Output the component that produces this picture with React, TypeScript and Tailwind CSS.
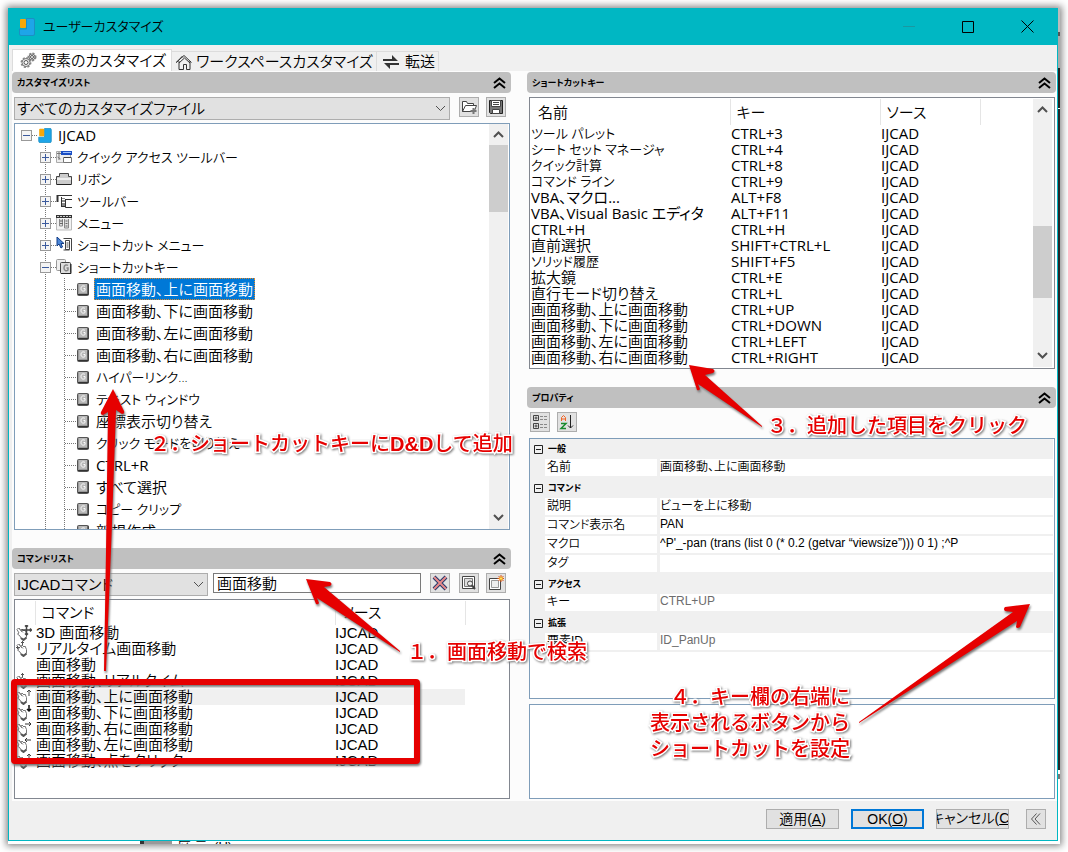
import { useState } from "react";
import type { ReactNode } from "react";
import clsx from "clsx";

type IconName =
  | "logo"
  | "quick"
  | "ribbon"
  | "toolbar"
  | "menu"
  | "context"
  | "keys"
  | "key";

type TreeItem = { label: string; level: number; icon: IconName; open?: boolean };

var treeItems: TreeItem[] = [
  { label: "IJCAD", level: 0, icon: "logo", open: true },
  { label: "クイック アクセス ツールバー", level: 1, icon: "quick" },
  { label: "リボン", level: 1, icon: "ribbon" },
  { label: "ツールバー", level: 1, icon: "toolbar" },
  { label: "メニュー", level: 1, icon: "menu" },
  { label: "ショートカット メニュー", level: 1, icon: "context" },
  { label: "ショートカットキー", level: 1, icon: "keys", open: true },
  { label: "画面移動、上に画面移動", level: 2, icon: "key" },
  { label: "画面移動、下に画面移動", level: 2, icon: "key" },
  { label: "画面移動、左に画面移動", level: 2, icon: "key" },
  { label: "画面移動、右に画面移動", level: 2, icon: "key" },
  { label: "ハイパーリンク...", level: 2, icon: "key" },
  { label: "テキスト ウィンドウ", level: 2, icon: "key" },
  { label: "座標表示切り替え", level: 2, icon: "key" },
  { label: "クリック モードを切り替え", level: 2, icon: "key" },
  { label: "CTRL+R", level: 2, icon: "key" },
  { label: "すべて選択", level: 2, icon: "key" },
  { label: "コピー クリップ", level: 2, icon: "key" },
  { label: "新規作成", level: 2, icon: "key" },
];

type HandKind = "cross" | "real" | "up" | "down" | "right" | "left" | "none";

var commands: { name: string; hand: HandKind }[] = [
  { name: "3D 画面移動", hand: "cross" },
  { name: "リアルタイム画面移動", hand: "real" },
  { name: "画面移動", hand: "none" },
  { name: "画面移動、リアルタイム", hand: "real" },
  { name: "画面移動、上に画面移動", hand: "up" },
  { name: "画面移動、下に画面移動", hand: "down" },
  { name: "画面移動、右に画面移動", hand: "right" },
  { name: "画面移動、左に画面移動", hand: "left" },
  { name: "画面移動、点をクリック", hand: "up" },
];

var shortcuts = [
  ["ツール パレット", "CTRL+3"],
  ["シート セット マネージャ", "CTRL+4"],
  ["クイック計算", "CTRL+8"],
  ["コマンド ライン", "CTRL+9"],
  ["VBA、マクロ...", "ALT+F8"],
  ["VBA、Visual Basic エディタ", "ALT+F11"],
  ["CTRL+H", "CTRL+H"],
  ["直前選択", "SHIFT+CTRL+L"],
  ["ソリッド履歴", "SHIFT+F5"],
  ["拡大鏡", "CTRL+E"],
  ["直行モード切り替え", "CTRL+L"],
  ["画面移動、上に画面移動", "CTRL+UP"],
  ["画面移動、下に画面移動", "CTRL+DOWN"],
  ["画面移動、左に画面移動", "CTRL+LEFT"],
  ["画面移動、右に画面移動", "CTRL+RIGHT"],
];

var properties = [
  {
    title: "一般",
    rows: [{ name: "名前", value: "画面移動、上に画面移動" }],
  },
  {
    title: "コマンド",
    rows: [
      { name: "説明", value: "ビューを上に移動" },
      { name: "コマンド表示名", value: "PAN" },
      {
        name: "マクロ",
        value: "^P'_-pan (trans (list 0 (* 0.2 (getvar “viewsize”))) 0 1) ;^P",
      },
      { name: "タグ", value: "" },
    ],
  },
  { title: "アクセス", rows: [{ name: "キー", value: "CTRL+UP", muted: true }] },
  { title: "拡張", rows: [{ name: "要素ID", value: "ID_PanUp", muted: true }] },
];

// labels written mostly in katakana are set one step smaller, latin ones heavier
function labelStyle(label: string) {
  if (/^[ァ-ー]{3}/.test(label)) return "text-[13px]";
  return /^[A-Z]/.test(label) ? "text-[15px] font-normal" : "text-[15px]";
}

function LogoIcon({ className }: { className?: string }) {
  return (
    <svg viewBox="0 0 16 18" className={className}>
      <path
        d="M7.500 .5h6.500q1.500 0 1.500 1.500v14q0 1.500-1.500 1.500H2Q.5 17.500 .5 16V11h7z"
        fill="#1ea5e8"
        stroke="#1b8fc4"
      />
      <rect x="1" y="1" width="6" height="9" rx="1" fill="#f7a70a" />
    </svg>
  );
}

function TreeIcon({ name }: { name: IconName }) {
  if (name == "logo") return <LogoIcon className="w-[14px] h-[15px] mr-px" />;
  if (name == "key")
    return (
      <svg width="12" height="13" viewBox="0 0 12 13" fill="none">
        <rect x=".5" y=".5" width="11" height="12" rx="1" fill="#9a9a9a" stroke="#555" />
        <path d="M1 11.500h10M11 1v11" stroke="#333" />
        <rect x="2" y="1" width="8" height="9" fill="#b8b8b8" />
        <path d="M8 3.500C7 2.500 4 2.500 4 5.500s3 3 4 2V5.500H6.500" stroke="#fff" />
      </svg>
    );
  return (
    <svg width="16" height="16" viewBox="0 0 16 16" fill="none">
      {name == "quick" && (
        <>
          <path d="M.5 2.500h14v11H.5z" fill="#eee" stroke="#aaa" />
          <path d="M5 2h11v4H5z" fill="#1c4fc4" />
          <path d="M7 3.500h8" stroke="#9fc2ff" />
          <path d="M1 4.500h4M3 3v8M1.500 8l3 2" stroke="#777" />
          <path d="M7.500 8.500h8v5h-8z" fill="#fff" stroke="#777" />
          <path d="M8 8.500h7" stroke="#444" />
        </>
      )}
      {name == "ribbon" && (
        <>
          <path d="M.5 5.500h3v-3h9v3h3v8H.5z" fill="#ccc" stroke="#444" />
          <path d="M1 7h14v2H1z" fill="#eee" />
          <path d="M1 13.500h14" stroke="#222" />
        </>
      )}
      {name == "toolbar" && (
        <>
          <path d="M1.500 2v7" stroke="#333" strokeWidth="2" />
          <path d="M2 2.500h14M9.500 6.500H16M9.500 6v8.500H16M5.500 4v9.500M5 13.500h4" stroke="#333" />
          <path d="M6 5h3v8H6z" fill="#888" />
          <path d="M6 6.500h3M6 9.500h3M3 4.500h2M3 7.500h2" stroke="#fff" />
        </>
      )}
      {name == "menu" && (
        <>
          <path d="M.5 2h15v13H.5z" fill="#f2f2f2" stroke="#bbb" />
          <path d="M0 1.500h16" stroke="#333" strokeWidth="3" />
          <path d="M1 1.500h14" stroke="#ccc" strokeDasharray="2 1" />
          <path d="M3.500 4v7h3V4M8.500 4v9h4V4" fill="#ddd" stroke="#888" />
          <path d="M4 6h3M4 8.500h3M9.500 6h2M9.500 8.500h2M9.500 11h2" stroke="#666" />
        </>
      )}
      {name == "context" && (
        <>
          <path d="M1 0v9l2-2 2 4 1.500-1L5 6.500h3z" fill="#4b86d8" stroke="#123c86" />
          <path d="M9.500 3.500h4v9h-4z" fill="#fff" stroke="#444" />
          <path d="M12 1.500h3.500V14M7.500 1.500H13M7.500 13h6" stroke="#444" />
          <path d="M10.500 6h2M10.500 8h2M10.500 10h2" stroke="#444" />
        </>
      )}
      {name == "keys" && (
        <>
          <rect x=".5" y=".5" width="9" height="11" rx="1" fill="#eee" stroke="#999" />
          <rect x="4.500" y="3.500" width="10" height="11" rx="1" fill="#ddd" stroke="#444" />
          <path d="M5 14.500h10V5" stroke="#222" />
          <path d="M12 6.500c-1-1-4-1-4 2.500s3 3 4 2V9h-1.500" stroke="#888" strokeWidth="1.500" />
        </>
      )}
    </svg>
  );
}

// dotted guide lines plus the +/- box at the start of every tree row
function TreeLines({ level, open }: { level: number; open?: boolean }) {
  var width = level == 0 ? 23 : level == 1 ? 41 : 62;
  var boxX = level == 0 ? 6 : 25;
  return (
    <svg width={width} height="22" viewBox={`0 0 ${width} 22`} fill="none" stroke="#777">
      {level > 0 && <path d="M30.500 0v22" strokeDasharray="1 1" />}
      {level == 2 ? (
        <path d="M49.500 0v22M50 11.500h12" strokeDasharray="1 1" />
      ) : (
        <>
          <path d={`M${boxX + 11} 11.500h6`} strokeDasharray="1 1" />
          <rect x={boxX + 0.5} y="6.500" width="10" height="10" fill="#f4f4f4" stroke="#999" />
          <path d={`M${boxX + 2} 11.500h7`} stroke="#3b5a9d" />
          {!open && <path d={`M${boxX + 5.5} 8v7`} stroke="#3b5a9d" />}
        </>
      )}
    </svg>
  );
}

function HandIcon({ kind }: { kind: HandKind }) {
  if (kind == "none") return null;
  return (
    <svg width="16" height="16" viewBox="0 0 16 16" fill="none" className="ml-px">
      <path
        d="M1 4.500L2.500 3 5 5.500 6 4l2 2 1-1 1.500 3.500V12l-2 2H5.500L4 11 1.500 9 3 8 1 4.500M3 3l3 4M5 5.500l2 2"
        stroke="#777"
      />
      <path d="M5 13l2.500 2 3-2.500" stroke="#555" strokeWidth="2" />
      {kind == "cross" && (
        <path d="M10.500 0v10M5.500 5h10M9 1.500L10.500 0 12 1.500M9 8.500l1.500 1.500L12 8.500M14 3.500L15.500 5 14 6.500" stroke="#444" strokeWidth="1.500" />
      )}
      {kind == "real" && <path d="M0 6.500h4M1.500 5v3M6.500 0v4M5 1.500h3" stroke="#555" />}
      {kind == "up" && <path d="M13 7V1M11 3l2-2 2 2" stroke="#444" />}
      {kind == "down" && <path d="M13 0v6M11 4l2 2 2-2" stroke="#111" strokeWidth="1.500" />}
      {kind == "right" && <path d="M9 3h6M13 1l2 2-2 2" stroke="#333" />}
      {kind == "left" && <path d="M9 3h6M11 1L9 3l2 2" stroke="#333" />}
    </svg>
  );
}

function Chevron({ up, light }: { up?: boolean; light?: boolean }) {
  return (
    <svg width="11" height="7" viewBox="0 0 11 7" fill="none" stroke="#505050" strokeWidth={light ? 1 : 2}>
      <path d={up ? "M1 6l4.500-4.500L10 6" : "M1 1l4.500 4.500L10 1"} />
    </svg>
  );
}

function PanelHeader({ title }: { title: string }) {
  return (
    <div className="flex h-[21px] items-center justify-between rounded-sm bg-[#c0c0c0] pl-[5px] pr-[5px]">
      <h2 className="text-[9px] leading-3 font-bold">{title}</h2>
      <button type="button" aria-label={`${title}を折りたたむ`}>
        <svg width="13" height="12" viewBox="0 0 13 12" fill="none" stroke="#000" strokeWidth="2">
          <path d="M1 6l5.500-4.500L12 6M1 11l5.500-4.500L12 11" />
        </svg>
      </button>
    </div>
  );
}

function ToolButton({ label, children }: { label: string; children: ReactNode }) {
  return (
    <button
      type="button"
      aria-label={label}
      className="flex h-5 w-5 shrink-0 items-center justify-center border border-[#adadad] bg-[#e1e1e1]"
    >
      <svg width="16" height="16" viewBox="0 0 16 16" fill="none" stroke="#444">
        {children}
      </svg>
    </button>
  );
}

function Combo({ label, value, className }: { label: string; value: string; className: string }) {
  return (
    <div className={clsx("relative h-[23px]", className)}>
      <select
        aria-label={label}
        className="block h-full w-full appearance-none border border-[#adadad] bg-[#e1e1e1] pl-0.5 text-[15px] leading-5"
      >
        <option>{value}</option>
      </select>
      <span className="pointer-events-none absolute top-2 right-1">
        <Chevron light />
      </span>
    </div>
  );
}

function ScrollBar({ before, thumb, className }: { before: string; thumb: string; className: string }) {
  return (
    <div className={clsx("flex w-[19px] shrink-0 flex-col items-center bg-[#f0f0f0]", className)}>
      <div className="flex h-[21px] shrink-0 items-center">
        <Chevron up />
      </div>
      <div className={before} />
      <div className={clsx("w-full bg-[#cdcdcd]", thumb)} />
      <div className="mt-auto flex h-6 items-center">
        <Chevron />
      </div>
    </div>
  );
}

function CustomizeTree() {
  var [selected, setSelected] = useState("画面移動、上に画面移動");

  return (
    <div className="ml-0.5 mr-px mt-[3px] flex h-[407px] overflow-hidden border border-[#7f9db9] bg-white">
      <ul className="min-w-0 flex-1 font-['Open_Sans','Noto_Sans_CJK_JP',sans-serif] leading-5">
        {treeItems.map((item) => (
          <li key={item.label} className="flex h-[22px] items-center">
            <TreeLines level={item.level} open={item.open} />
            <TreeIcon name={item.icon} />
            <button
              type="button"
              onClick={() => setSelected(item.label)}
              className={clsx(
                "border border-dotted px-px whitespace-nowrap",
                labelStyle(item.label),
                item.level == 2 ? "ml-[5px]" : "ml-[3px]",
                selected == item.label ? "border-[#e08a2c] bg-[#0078d7] text-white" : "border-transparent"
              )}
            >
              {item.label}
            </button>
          </li>
        ))}
      </ul>
      <ScrollBar before="" thumb="h-[67px]" className="mr-px" />
    </div>
  );
}

function CommandList() {
  return (
    <div className="ml-0.5 mr-px mt-[3px] h-[200px] overflow-hidden border border-[#828790] bg-white pt-px">
      <table className="w-full table-fixed border-collapse text-left text-[15px] leading-4">
        <colgroup>
          <col className="w-5" />
          <col className="w-[300px]" />
          <col className="w-[130px]" />
          <col />
        </colgroup>
        <thead>
          <tr className="h-6">
            <th className="border-r border-[#e5e5e5]" />
            <th className="border-r border-[#e5e5e5] pl-1.5 font-[350]">コマンド</th>
            <th className="border-r border-[#e5e5e5] pl-1.5 font-[350]">ソース</th>
            <th />
          </tr>
        </thead>
        <tbody>
          {commands.map((command, i) => (
            <tr key={command.name} className="h-4">
              <td className="p-0">
                <HandIcon kind={command.hand} />
              </td>
              <td className={clsx("p-0 pl-px whitespace-nowrap", i == 4 && "bg-[#f0f0f0]")}>{command.name}</td>
              <td className={clsx("p-0", i == 4 && "bg-[#f0f0f0]")}>IJCAD</td>
              <td />
            </tr>
          ))}
        </tbody>
      </table>
    </div>
  );
}

function ShortcutList() {
  return (
    <div className="ml-0.5 mr-px mt-1 flex h-[272px] overflow-hidden border border-[#828790] bg-white py-px">
      <div className="min-w-0 flex-1">
        <table className="w-full table-fixed border-collapse text-left font-['Open_Sans','Noto_Sans_CJK_JP',sans-serif] text-[15px] leading-4">
          <colgroup>
            <col className="w-[200px]" />
            <col className="w-[150px]" />
            <col className="w-[100px]" />
            <col />
          </colgroup>
          <thead>
            <tr className="h-[26px]">
              <th className="border-r border-[#e5e5e5] pl-2 font-[350]">名前</th>
              <th className="border-r border-[#e5e5e5] pl-1.5 font-[350]">キー</th>
              <th className="border-r border-[#e5e5e5] pl-1.5 font-[350]">ソース</th>
              <th />
            </tr>
          </thead>
          <tbody>
            {shortcuts.map(([name, key]) => (
              <tr key={name} className="h-4 whitespace-nowrap">
                <td className={clsx("p-0 pl-px leading-4", labelStyle(name))}>{name}</td>
                <td className="p-0 pl-px font-normal">{key}</td>
                <td className="p-0 pl-px font-normal">IJCAD</td>
                <td />
              </tr>
            ))}
          </tbody>
        </table>
      </div>
      <ScrollBar before="h-[106px]" thumb="h-[72px]" className="mr-0.5" />
    </div>
  );
}

function PropertyGrid() {
  return (
    <div className="ml-0.5 mr-px mt-1.5 h-[261px] overflow-hidden border border-[#7f9db9] bg-white pr-px">
      {properties.map((group) => (
        <section key={group.title} className="bg-[#f0f0f0]">
          <div className="flex h-5 items-center gap-[5px] pl-1">
            <button type="button" aria-label={`${group.title}を折りたたむ`}>
              <svg width="9" height="9" viewBox="0 0 9 9" fill="none" stroke="#222">
                <path d="M.5 .5h8v8h-8zM2 4.500h5" />
              </svg>
            </button>
            <h3 className="text-[9px] leading-3 font-bold">{group.title}</h3>
          </div>
          {group.rows.map((row) => (
            <label key={row.name} className="flex gap-[3px] pb-0.5 pl-[15px] text-[12px] leading-4">
              <span className="h-[17px] w-28 shrink-0 bg-white pl-0.5">{row.name}</span>
              <input
                defaultValue={row.value}
                readOnly={row.muted}
                className={clsx("h-[17px] min-w-0 flex-1 bg-white pb-1", row.muted && "text-[#6d6d6d]")}
              />
            </label>
          ))}
        </section>
      ))}
    </div>
  );
}

function Note({ className, children }: { className: string; children: ReactNode }) {
  return (
    <p
      className={clsx(
        "absolute text-right text-[20px] leading-[26px] font-medium whitespace-nowrap text-[#e60000] [font-feature-settings:normal]",
        "[paint-order:stroke_fill] [-webkit-text-stroke:3px_white] [filter:drop-shadow(1px_1px_1px_#777)]",
        className
      )}
    >
      {children}
    </p>
  );
}

function Annotations() {
  return (
    <div className="pointer-events-none absolute inset-0">
      <svg
        width="1068"
        height="852"
        viewBox="0 0 1068 852"
        className="[filter:drop-shadow(1px_2px_1px_#777)]"
        fill="#e60000"
      >
        <rect x="14" y="682" width="403" height="79" rx="1" fill="none" stroke="#e60000" strokeWidth="6" />
        <path d="M113 389l11 22q1 3-2 3l-6-4-5 140-5 121h-2l2-120 2-139-5 3q-3 0-2-3z" />
        <path d="M306 579l24 3q3 2 0 4l-6 1 76 64v1l-83-54 2 5q-1 2-3 1z" />
        <path d="M689 365l24 4q3 2 0 4l-8 2 57 51v1l-64-43 2 5q-1 2-3 1z" />
        <path d="M1030 604l-25 3q-2 2 0 4l8 1-154 110v1l158-102-1 6q1 2 4 0z" />
      </svg>
      <Note className="top-[431px] left-[150px]">
        ２．ショートカットキーに<b>D&amp;D</b>して追加
      </Note>
      <Note className="top-[639px] left-[407px]">１．画面移動で検索</Note>
      <Note className="top-[413px] left-[767px]">３．追加した項目をクリック</Note>
      <Note className="top-[684px] left-[650px]">
        ４．キー欄の右端に
        <br />
        表示されるボタンから
        <br />
        ショートカットを設定
      </Note>
    </div>
  );
}

function TitleBar() {
  return (
    <header className="flex h-[37px] items-center bg-[#00b7c3] pl-2.5">
      <LogoIcon className="h-[18px] w-4" />
      <h1 className="ml-2 flex-1 text-[13px] leading-5 font-[350]">ユーザーカスタマイズ</h1>
      <button type="button" aria-label="最小化" className="w-[58px]">
        <svg width="12" height="12" viewBox="0 0 12 12" stroke="#1a98a1" className="mx-auto">
          <path d="M0 5.500h12" />
        </svg>
      </button>
      <button type="button" aria-label="最大化" className="w-[59px]">
        <svg width="12" height="12" viewBox="0 0 12 12" stroke="#000" fill="none" className="mx-auto">
          <path d="M.5 .5h11v11H.5z" />
        </svg>
      </button>
      <button type="button" aria-label="閉じる" className="w-[60px]">
        <svg width="13" height="13" viewBox="0 0 13 13" stroke="#000" className="mx-auto">
          <path d="M.5 .5l12 12M12.500 .5l-12 12" />
        </svg>
      </button>
    </header>
  );
}

function TabBar() {
  return (
    <nav className="flex h-[26px] items-end pl-[3px] text-[15px] leading-5">
      <button
        type="button"
        className="flex h-[22px] w-[160px] items-center gap-1 border border-b-0 border-[#dcdcdc] bg-white pl-[7px] whitespace-nowrap"
      >
        <svg width="17" height="17" viewBox="0 0 17 17" fill="none" className="shrink-0">
          <circle cx="6" cy="10.500" r="4.500" stroke="#888" strokeWidth="2" strokeDasharray="2 1.500" />
          <circle cx="6" cy="10.500" r="4" fill="#eee" stroke="#777" />
          <circle cx="6" cy="10.500" r="2" fill="#fff" stroke="#555" />
          <circle cx="12" cy="5" r="3.500" stroke="#888" strokeWidth="2" strokeDasharray="2 1.300" />
          <circle cx="12" cy="5" r="3" fill="#eee" stroke="#777" />
          <circle cx="12" cy="5" r="1.500" fill="#fff" stroke="#555" />
        </svg>
        要素のカスタマイズ
      </button>
      <button
        type="button"
        className="flex h-5 w-[205px] items-center gap-1 border-t border-r border-[#dcdcdc] pl-1 whitespace-nowrap"
      >
        <svg width="16" height="16" viewBox="0 0 16 16" fill="none" stroke="#333" className="shrink-0">
          <path d="M.5 8.500L6 2.500l1 1M0 8.500l8-7 7.500 7M3 7v8.500h4.500v-5h3v5H14V7" />
          <path d="M3 9l5.500-5L14 9" />
        </svg>
        ワークスペースカスタマイズ
      </button>
      <button
        type="button"
        className="flex h-5 w-[62px] items-center gap-1.5 border-t border-r border-[#dcdcdc] pl-1.5 whitespace-nowrap"
      >
        <svg width="16" height="14" viewBox="0 0 16 14" fill="#333" className="shrink-0">
          <path d="M0 4h9V0l6 6H0zM16 8H1l6 6v-4h9z" />
        </svg>
        転送
      </button>
    </nav>
  );
}

function Footer() {
  var button = "h-5 w-[73px] overflow-hidden whitespace-nowrap bg-[#e1e1e1]";
  return (
    <footer className="flex h-[39px] items-start justify-end gap-3 pt-2 pr-[11px] text-[14px] leading-4">
      <button type="button" className={clsx(button, "border border-[#adadad]")}>
        適用(<u>A</u>)
      </button>
      <button type="button" className={clsx(button, "border-2 border-[#0078d7]")}>
        OK(<u>O</u>)
      </button>
      <button type="button" className={clsx(button, "flex justify-center border border-[#adadad]")}>
        <span>
          キャンセル(<u>C</u>)
        </span>
      </button>
      <button
        type="button"
        aria-label="折りたたむ"
        className="ml-[5px] flex h-5 w-5 items-center justify-center border border-[#adadad] bg-[#e1e1e1]"
      >
        <svg width="10" height="12" viewBox="0 0 10 12" fill="none" stroke="#555">
          <path d="M5.500 .5L.5 6l5 5.500M9 .5L4 6l5 5.500" />
        </svg>
      </button>
    </footer>
  );
}

function App() {
  return (
    <div className="relative overflow-hidden bg-white p-2 font-['Liberation_Sans','Noto_Sans_CJK_JP',sans-serif] font-[350] text-black [font-feature-settings:'palt']">
      <div className="bg-white shadow-[0_0_7px_2px_#888]">
        <div className="flex">
          <div className="min-w-0 flex-1 border border-t-0 border-[#00b7c3] bg-[#f0f0f0]">
            <TitleBar />
            <TabBar />
            <main className="ml-[3px] grid grid-cols-[499fr_529fr] gap-x-4 bg-[#fcfcfc] pt-px pr-px pb-0.5">
              <div className="min-w-0">
                <PanelHeader title="カスタマイズリスト" />
                <div className="mt-1 ml-0.5 mr-[5px] flex">
                  <Combo label="カスタマイズファイル" value="すべてのカスタマイズファイル" className="flex-1" />
                  <div className="ml-[9px] flex gap-[7px]">
                    <ToolButton label="ファイルを開く">
                      <path d="M1.500 12.500v-10h4l1 2h6v2M1.500 12.500l3-6h11l-2 5M1.500 12.500h9" fill="#fff" />
                      <path d="M12.500 9v6M9.500 12h6" stroke="#777" strokeWidth="2" />
                    </ToolButton>
                    <ToolButton label="保存">
                      <path d="M1.500 1.500h13v13h-12l-1-1z" fill="#777" stroke="#222" />
                      <path d="M3.500 1.500h9v6h-9z" fill="#fff" />
                      <path d="M5 3.500h6M5 5.500h6" />
                      <path d="M4.500 10.500h7v4h-7z" fill="#fff" />
                    </ToolButton>
                  </div>
                </div>
                <CustomizeTree />
                <div className="mt-[18px]">
                  <PanelHeader title="コマンドリスト" />
                </div>
                <div className="mt-1 ml-0.5 mr-[5px] flex">
                  <Combo label="コマンドの種類" value="IJCADコマンド" className="w-[194px]" />
                  <input
                    aria-label="コマンドを検索"
                    defaultValue="画面移動"
                    className="mr-[9px] ml-[5px] h-5 min-w-0 flex-1 border border-[#7a7a7a] bg-white pb-0.5 pl-[3px] text-[15px] leading-4"
                  />
                  <ToolButton label="クリア">
                    <path d="M2 2l12 12M14 2L2 14" stroke="#26386b" strokeWidth="4" />
                    <path d="M2 2l12 12M14 2L2 14" stroke="#e88a8a" strokeWidth="2" />
                  </ToolButton>
                  <div className="ml-[9px] flex gap-[7px]">
                    <ToolButton label="検索">
                      <path d="M1.500 1.500h12v12h-12z" fill="#fff" />
                      <path d="M3.500 3.500h8v8h-8z" fill="#ddd" stroke="#777" />
                      <circle cx="9" cy="8.500" r="2.500" fill="#eee" />
                      <path d="M11 10.500l3 3.500" strokeWidth="2" />
                    </ToolButton>
                    <ToolButton label="新規コマンド">
                      <path d="M1.500 3.500h11v11h-11z" fill="#fff" />
                      <path d="M3.500 5.500h7v7h-7z" fill="#eee" stroke="#999" />
                      <path d="M13 0v7M9.500 3.500h7M10.500 1l5 5M15.500 1l-5 5" stroke="#e0501c" />
                      <circle cx="13" cy="3.500" r="1.500" fill="#ffe36a" stroke="#f2a91d" />
                    </ToolButton>
                  </div>
                </div>
                <CommandList />
              </div>
              <div className="min-w-0">
                <PanelHeader title="ショートカットキー" />
                <ShortcutList />
                <div className="mt-[18px]">
                  <PanelHeader title="プロパティ" />
                </div>
                <div className="mt-1 ml-[3px] flex gap-[7px]">
                  <ToolButton label="項目別">
                    <path d="M1.500 1.500h5v5h-5zM1.500 9.500h5v5h-5zM4 2.500v3M2.500 4h3M4 10.500v3M2.500 12h3" />
                    <path d="M8 2.500h3M12 2.500h3M8 5.500h3M12 5.500h3M8 10.500h3M12 10.500h3M8 13.500h3M12 13.500h3" stroke="#888" />
                  </ToolButton>
                  <ToolButton label="アルファベット順">
                    <path d="M2.500 7V3.500l2-2 2 2V7M2.500 5h4" stroke="#f26322" />
                    <path d="M2 9.500h5l-5 5h5" stroke="#1b8a2f" strokeWidth="1.500" />
                    <path d="M11.500 1v13M9 11.500l2.500 2.500 2.500-2.500" stroke="#222" />
                  </ToolButton>
                </div>
                <PropertyGrid />
                <div className="mt-[5px] mr-px ml-0.5 h-[95px] border border-[#7f9db9] bg-white" />
              </div>
            </main>
            <Footer />
          </div>
          {/* sliver of the application behind the dialog */}
          <div className="flex w-0.5 flex-col bg-white">
            <div className="h-6 bg-[#bbb]" />
            <div className="h-1 bg-[#555]" />
            <div className="h-8 bg-[#aaa]" />
            <div className="h-10 bg-[#222]" />
            <div className="h-px bg-white" />
            <div className="h-[661px] bg-[#22282c]" />
            <div className="mt-1 h-[5px] bg-[#777]" />
          </div>
        </div>
        <div className="flex h-[3px] items-start overflow-hidden pl-[132px]">
          <span className="h-[3px] w-1 bg-[#333]" />
          <span className="h-[3px] w-7 bg-[#999]" />
          <span className="ml-1.5 text-[13px] leading-3">区 示、(U)</span>
        </div>
      </div>
      <Annotations />
    </div>
  );
}

export default App;
